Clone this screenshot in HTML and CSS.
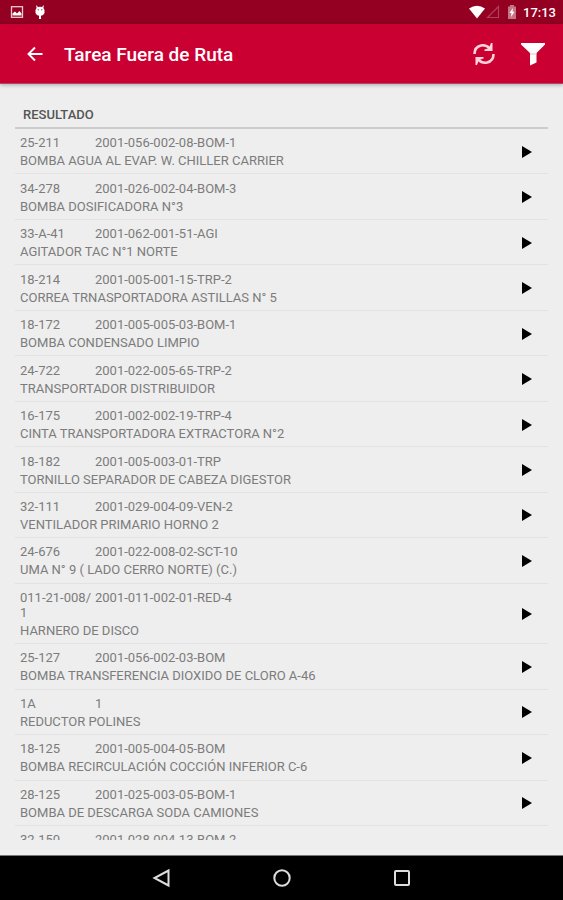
FILE: index.html
```html
<!DOCTYPE html>
<html lang="es">
<head>
<meta charset="utf-8">
<meta name="viewport" content="width=device-width, initial-scale=1">
<title>Tarea Fuera de Ruta</title>
<link rel="stylesheet" href="styles.css">
</head>
<body>
<svg class="defs" aria-hidden="true"><symbol id="play" viewBox="0 0 10 12"><path d="M0 0L10 6L0 12Z"/></symbol></svg>
<div class="status">
  <svg class="picture" width="14" height="14" viewBox="0 0 14 14"><rect x="1.500" y="1.700" width="11" height="10.600" fill="none" stroke="#f0c8d0" stroke-width="1.300"/><path d="M2.500 10.500V8.500L5 6.500L7 8.500L9.500 6L11.500 8.500V10.500Z" fill="#fff"/></svg>
  <svg width="12" height="16" viewBox="0 0 12 16"><path d="M2 1L4 3Q6 2.400 8 3L10 1L9.400 4Q11.400 6 10.500 9Q9.500 11.500 7 11.700V15H5V11.700Q2.500 11.500 1.500 9Q.6 6 2.600 4Z" fill="#fff"/><circle cx="4.200" cy="5.700" r=".7" fill="#a85060"/><circle cx="7.800" cy="5.700" r=".7" fill="#a85060"/></svg>
  <span class="grow"></span>
  <svg width="18" height="14" viewBox="0 0 18 14"><path d="M1 3.500Q9-2 17 3.500L9 13.500Z" fill="#fff"/></svg>
  <svg class="signal" width="14" height="14" viewBox="0 0 14 14"><path d="M12.500 1.500V12.500H1.500Z" fill="none" stroke="#b0405a" stroke-width="1.200"/></svg>
  <svg class="battery" width="10" height="14" viewBox="0 0 10 14"><path d="M3 0H7V1.500H9V14H1V1.500H3Z" fill="#c67586"/><path d="M6 3L2.500 8H4.500L4 12L7.500 6.800H5.500Z" fill="#fff"/></svg>
  <time class="clock">17:13</time>
</div>
<header class="bar">
  <button class="icon" aria-label="Volver"><svg width="18" height="18" viewBox="0 0 18 18"><path d="M16.500 9H3M9 2.500L2.500 9L9 15.500" fill="none" stroke="#fff" stroke-width="1.900"/></svg></button>
  <h1 class="title">Tarea Fuera de Ruta</h1>
  <button class="icon sync" aria-label="Actualizar"><svg width="24" height="24" viewBox="0 0 24 24"><path d="M2.500 12Q2.500 5 9 3.500Q14 2.500 18 6.500M21.500 12Q21.500 19 15 20.500Q10 21.500 6 17.500" fill="none" stroke="#ffd3dc" stroke-width="2.600"/><path d="M20.500 1V9H12.500V7.500L17 6L19 1ZM3.500 23V15H11.500V16.500L7 18L5 23Z" fill="#ffd3dc"/></svg></button>
  <button class="icon" aria-label="Filtrar"><svg width="26" height="24" viewBox="0 0 26 24"><path d="M1 1H25V2.500L16.500 11V20.500L10 23.500V11L1 2.500Z" fill="#fff"/><path d="M10 12H16.500" stroke="#f3bcc7" stroke-width="1"/></svg></button>
</header>
<main class="results">
  <h2 class="heading">RESULTADO</h2>
  <ul class="list">
    <li class="row"><div class="text"><span class="code">25-211</span><span>2001-056-002-08-BOM-1</span><p class="name">BOMBA AGUA AL EVAP. W. CHILLER CARRIER</p></div><button class="open" aria-label="Abrir 25-211"><svg><use href="#play"/></svg></button></li>
    <li class="row"><div class="text"><span class="code">34-278</span><span>2001-026-002-04-BOM-3</span><p class="name">BOMBA DOSIFICADORA N°3</p></div><button class="open" aria-label="Abrir 34-278"><svg><use href="#play"/></svg></button></li>
    <li class="row"><div class="text"><span class="code">33-A-41</span><span>2001-062-001-51-AGI</span><p class="name">AGITADOR TAC N°1 NORTE</p></div><button class="open" aria-label="Abrir 33-A-41"><svg><use href="#play"/></svg></button></li>
    <li class="row"><div class="text"><span class="code">18-214</span><span>2001-005-001-15-TRP-2</span><p class="name">CORREA TRNASPORTADORA ASTILLAS N° 5</p></div><button class="open" aria-label="Abrir 18-214"><svg><use href="#play"/></svg></button></li>
    <li class="row"><div class="text"><span class="code">18-172</span><span>2001-005-005-03-BOM-1</span><p class="name">BOMBA CONDENSADO LIMPIO</p></div><button class="open" aria-label="Abrir 18-172"><svg><use href="#play"/></svg></button></li>
    <li class="row"><div class="text"><span class="code">24-722</span><span>2001-022-005-65-TRP-2</span><p class="name">TRANSPORTADOR DISTRIBUIDOR</p></div><button class="open" aria-label="Abrir 24-722"><svg><use href="#play"/></svg></button></li>
    <li class="row"><div class="text"><span class="code">16-175</span><span>2001-002-002-19-TRP-4</span><p class="name">CINTA TRANSPORTADORA EXTRACTORA N°2</p></div><button class="open" aria-label="Abrir 16-175"><svg><use href="#play"/></svg></button></li>
    <li class="row"><div class="text"><span class="code">18-182</span><span>2001-005-003-01-TRP</span><p class="name">TORNILLO SEPARADOR DE CABEZA DIGESTOR</p></div><button class="open" aria-label="Abrir 18-182"><svg><use href="#play"/></svg></button></li>
    <li class="row"><div class="text"><span class="code">32-111</span><span>2001-029-004-09-VEN-2</span><p class="name">VENTILADOR PRIMARIO HORNO 2</p></div><button class="open" aria-label="Abrir 32-111"><svg><use href="#play"/></svg></button></li>
    <li class="row"><div class="text"><span class="code">24-676</span><span>2001-022-008-02-SCT-10</span><p class="name">UMA N° 9 ( LADO CERRO NORTE) (C.)</p></div><button class="open" aria-label="Abrir 24-676"><svg><use href="#play"/></svg></button></li>
    <li class="row"><div class="text"><span class="code">011-21-008/<wbr>1</span><span>2001-011-002-01-RED-4</span><p class="name">HARNERO DE DISCO</p></div><button class="open" aria-label="Abrir 011-21-008/1"><svg><use href="#play"/></svg></button></li>
    <li class="row"><div class="text"><span class="code">25-127</span><span>2001-056-002-03-BOM</span><p class="name">BOMBA TRANSFERENCIA DIOXIDO DE CLORO A-46</p></div><button class="open" aria-label="Abrir 25-127"><svg><use href="#play"/></svg></button></li>
    <li class="row"><div class="text"><span class="code">1A</span><span>1</span><p class="name">REDUCTOR POLINES</p></div><button class="open" aria-label="Abrir 1A"><svg><use href="#play"/></svg></button></li>
    <li class="row"><div class="text"><span class="code">18-125</span><span>2001-005-004-05-BOM</span><p class="name">BOMBA RECIRCULACIÓN COCCIÓN INFERIOR C-6</p></div><button class="open" aria-label="Abrir 18-125"><svg><use href="#play"/></svg></button></li>
    <li class="row"><div class="text"><span class="code">28-125</span><span>2001-025-003-05-BOM-1</span><p class="name">BOMBA DE DESCARGA SODA CAMIONES</p></div><button class="open" aria-label="Abrir 28-125"><svg><use href="#play"/></svg></button></li>
    <li class="row partial"><div class="text"><span class="code">32-150</span><span>2001-028-004-13-BOM-2</span></div></li>
  </ul>
</main>
<nav class="nav">
  <button class="icon" aria-label="Atrás"><svg width="20" height="20" viewBox="0 0 20 20"><path d="M16.500 2.500V17.500L2.500 10Z"/></svg></button>
  <button class="icon" aria-label="Inicio"><svg width="20" height="20" viewBox="0 0 20 20"><circle cx="10" cy="10" r="7.700"/></svg></button>
  <button class="icon" aria-label="Recientes"><svg width="20" height="20" viewBox="0 0 20 20"><rect x="3" y="3" width="14" height="14" rx="1"/></svg></button>
</nav>
</body>
</html>
```
FILE: styles.css
```css
* { box-sizing: border-box; }

body {
  margin: 0;
  height: 100vh;
  display: flex;
  flex-direction: column;
  background: #eee;
  color: #7c7c7c;
  font: 400 13px/15px Roboto, sans-serif;
}

h1, h2, p, ul { margin: 0; padding: 0; }
button { border: 0; padding: 0; background: none; cursor: pointer; }
svg { display: block; flex: none; }
.defs { position: absolute; width: 0; height: 0; }

.status {
  flex: none;
  display: flex;
  align-items: center;
  height: 24px;
  padding: 0 7px 0 10px;
  background: #930021;
}
.picture { margin-right: 10px; }
.grow { flex: 1; }
.signal { margin-right: 7px; }
.battery { margin-right: 6px; }
.clock {
  color: #fff;
  font-size: 13px;
  font-weight: 500;
}

.bar {
  flex: none;
  display: flex;
  align-items: center;
  height: 60px;
  padding: 0 17px 0 26px;
  background: #cb0032;
  border-bottom: 1px solid #b3465f;
  box-shadow: 0 1px 4px rgba(0, 0, 0, .3);
}
.icon {
  display: grid;
  place-items: center;
}
.title {
  flex: 1;
  margin-left: 20px;
  padding-top: 2px;
  color: #fff;
  font-size: 19px;
  line-height: 24px;
  font-weight: 500;
}
.sync { margin-right: 24px; }

.results {
  flex: 1;
  min-height: 0;
  display: flex;
  flex-direction: column;
  padding: 20px 15px 15px;
}
.heading {
  padding: 3px 8px 5px;
  border-bottom: 2px solid #ccc;
  color: #555;
  font-size: 13px;
  line-height: 15px;
  font-weight: 500;
}
.list {
  flex: 1;
  min-height: 0;
  display: flex;
  flex-direction: column;
  overflow: hidden;
  list-style: none;
}
.row {
  flex: 1 0 auto;
  display: flex;
  align-items: center;
  padding: 6px 15px 5px 5px;
  border-bottom: 1px solid #e2e2e2;
}
.partial {
  flex: 0 0 14px;
  align-items: flex-start;
  border: 0;
  overflow: hidden;
}
.text {
  flex: 1;
  display: grid;
  grid-template-columns: 75px 1fr;
  row-gap: 3px;
}
.name { grid-column: 1 / -1; }
.open svg {
  width: 10px;
  height: 12px;
  margin-right: 1px;
  fill: #000;
}

.nav {
  flex: none;
  display: flex;
  justify-content: center;
  align-items: center;
  gap: 100px;
  height: 45px;
  background: #000;
  border-top: 1px solid #777;
}
.nav svg {
  fill: none;
  stroke: #ddd;
  stroke-width: 2;
}
```
